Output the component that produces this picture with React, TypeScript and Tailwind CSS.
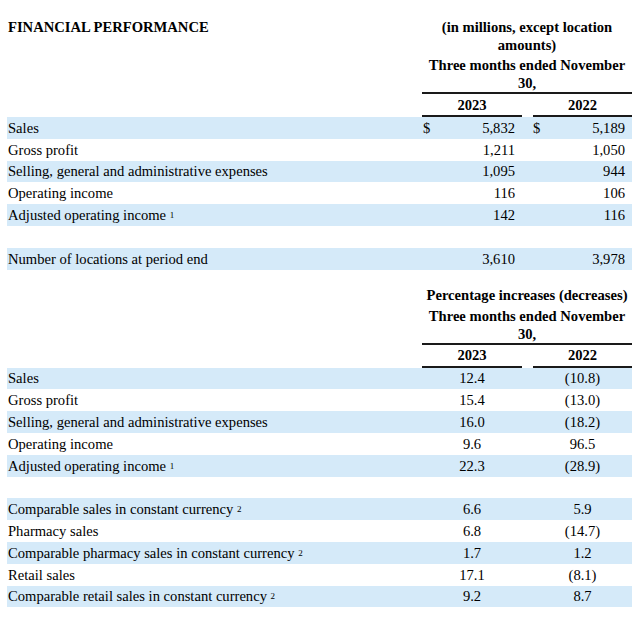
import React from "react";

type Row = { label: string; sup?: string; a: string; b: string; dollar?: boolean; band: boolean } | null;

const sec1: Row[] = [
  { label: "Sales", a: "5,832", b: "5,189", dollar: true, band: true },
  { label: "Gross profit", a: "1,211", b: "1,050", band: false },
  { label: "Selling, general and administrative expenses", a: "1,095", b: "944", band: true },
  { label: "Operating income", a: "116", b: "106", band: false },
  { label: "Adjusted operating income", sup: "1", a: "142", b: "116", band: true },
  null,
  { label: "Number of locations at period end", a: "3,610", b: "3,978", band: true },
];

const sec2: Row[] = [
  { label: "Sales", a: "12.4", b: "(10.8)", band: true },
  { label: "Gross profit", a: "15.4", b: "(13.0)", band: false },
  { label: "Selling, general and administrative expenses", a: "16.0", b: "(18.2)", band: true },
  { label: "Operating income", a: "9.6", b: "96.5", band: false },
  { label: "Adjusted operating income", sup: "1", a: "22.3", b: "(28.9)", band: true },
  null,
  { label: "Comparable sales in constant currency", sup: "2", a: "6.6", b: "5.9", band: true },
  { label: "Pharmacy sales", a: "6.8", b: "(14.7)", band: false },
  { label: "Comparable pharmacy sales in constant currency", sup: "2", a: "1.7", b: "1.2", band: true },
  { label: "Retail sales", a: "17.1", b: "(8.1)", band: false },
  { label: "Comparable retail sales in constant currency", sup: "2", a: "9.2", b: "8.7", band: true },
];

function Label({ r }: { r: NonNullable<Row> }) {
  return (
    <div className="w-[415px] pl-[1px] whitespace-nowrap">
      {r.label}
      {r.sup && (
        <>
          {" "}
          <sup className="text-[9px] relative top-[-2px]">{r.sup}</sup>
        </>
      )}
    </div>
  );
}

function MoneyRow({ r }: { r: Row }) {
  if (!r) return <div className="h-[21.8px]" />;
  return (
    <div className={`flex items-center h-[21.8px] ${r.band ? "bg-[#d5eaf9]" : ""}`}>
      <Label r={r} />
      <div className="w-[100px] flex justify-between pl-[1px] pr-[7px]">
        <span>{r.dollar ? "$" : ""}</span>
        <span>{r.a}</span>
      </div>
      <div className="w-[11px]" />
      <div className="w-[99px] flex justify-between pr-[7px]">
        <span>{r.dollar ? "$" : ""}</span>
        <span>{r.b}</span>
      </div>
    </div>
  );
}

function PctRow({ r }: { r: Row }) {
  if (!r) return <div className="h-[21.8px]" />;
  return (
    <div className={`flex items-center h-[21.8px] ${r.band ? "bg-[#d5eaf9]" : ""}`}>
      <Label r={r} />
      <div className="w-[100px] text-center">{r.a}</div>
      <div className="w-[11px]" />
      <div className="w-[99px] text-center">{r.b}</div>
    </div>
  );
}

function YearHeader() {
  return (
    <div className="flex border-t-2 border-[#1a1a1a] h-[25px]">
      <div className="w-[100px] border-b-2 border-[#1a1a1a] text-center font-bold flex items-center justify-center">2023</div>
      <div className="w-[11px]" />
      <div className="w-[99px] border-b-2 border-[#1a1a1a] text-center font-bold flex items-center justify-center">2022</div>
    </div>
  );
}

export default function App() {
  return (
    <div className="w-[640px] h-[619px] bg-white text-black font-['Liberation_Serif','Times_New_Roman',serif] text-[14.6px] leading-[18px] pl-[7px] pt-[18px]">
      <div className="w-[625px]">
        <div className="flex">
          <div className="w-[415px] pl-[1px] font-bold">FINANCIAL PERFORMANCE</div>
          <div className="w-[210px] font-bold">
            <div className="text-center px-[14px]">(in millions, except location amounts)</div>
            <div className="text-center mt-[2px]">Three months ended November 30,</div>
            <YearHeader />
          </div>
        </div>
        {sec1.map((r, i) => (
          <MoneyRow key={i} r={r} />
        ))}
        <div className="flex mt-[16px]">
          <div className="w-[415px]" />
          <div className="w-[210px] font-bold">
            <div className="text-center whitespace-nowrap">Percentage increases (decreases)</div>
            <div className="text-center mt-[3px]">Three months ended November 30,</div>
            <YearHeader />
          </div>
        </div>
        {sec2.map((r, i) => (
          <PctRow key={i} r={r} />
        ))}
      </div>
    </div>
  );
}
